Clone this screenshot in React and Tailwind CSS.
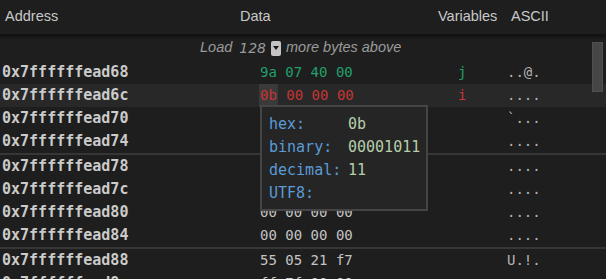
import React from "react";

const rowsA = [
  { addr: "0x7ffffffead68", data: ["9a", "07", "40", "00"], color: "text-[#22a06b]", v: "j", vc: "text-[#22a06b]", ascii: "..@." },
  { addr: "0x7ffffffead6c", data: ["0b", "00", "00", "00"], color: "text-[#c73535]", v: "i", vc: "text-[#c73535]", ascii: "....", hl: true },
  { addr: "0x7ffffffead70", data: ["00", "00", "00", "00"], ascii: "`..." },
  { addr: "0x7ffffffead74", data: ["00", "00", "00", "00"], ascii: "...." },
];
const rowsB = [
  { addr: "0x7ffffffead78", data: ["00", "00", "00", "00"], ascii: "...." },
  { addr: "0x7ffffffead7c", data: ["00", "00", "00", "00"], ascii: "...." },
  { addr: "0x7ffffffead80", data: ["00", "00", "00", "00"], ascii: "...." },
  { addr: "0x7ffffffead84", data: ["00", "00", "00", "00"], ascii: "...." },
];
const rowsC = [
  { addr: "0x7ffffffead88", data: ["55", "05", "21", "f7"], ascii: "U.!." },
  { addr: "0x7ffffffead8c", data: ["ff", "7f", "00", "00"], ascii: "...." },
];

function Row({ r }) {
  return (
    <div className={`flex h-[23px] items-center ${r.hl ? "bg-[#282828]" : ""}`}>
      <div className="w-[260px] pl-[2px] font-['DejaVu_Sans_Mono',monospace] font-bold text-[15px] text-[#cbcbcb]">
        {r.addr}
      </div>
      <div className={`w-[190px] h-full flex items-center font-['DejaVu_Sans_Mono',monospace] text-[14px] whitespace-pre ${r.color || "text-[#c4c4c4]"}`}>
        {r.data.map((b, i) => (
          <React.Fragment key={i}>
            {r.hl && i === 0 ? (
              <span className="h-full flex items-center bg-[#3a3a3a] -ml-[1px] px-[1px]">{b}</span>
            ) : (
              <span>{b}</span>
            )}
            {i < 3 ? <span> </span> : null}
          </React.Fragment>
        ))}
      </div>
      <div className={`w-[57px] pl-[8px] font-['DejaVu_Sans_Mono',monospace] text-[14px] ${r.vc || ""}`}>
        {r.v || ""}
      </div>
      <div className="font-['DejaVu_Sans_Mono',monospace] text-[14px] text-[#b4b4b4] whitespace-pre">
        {r.ascii}
      </div>
    </div>
  );
}

export default function App() {
  return (
    <div className="relative w-[606px] h-[279px] overflow-hidden bg-[#1e1e1e]">
      {/* header */}
      <div className="relative z-10 flex h-[35px] items-center border-b border-[#121212] shadow-[0_2px_3px_rgba(0,0,0,0.45)] font-['Liberation_Sans',Arial,sans-serif] text-[14.5px] text-[#c8c8c8] pb-[1px]">
        <div className="w-[240px] pl-[5px]">Address</div>
        <div className="w-[198px]">Data</div>
        <div className="w-[73px]">Variables</div>
        <div>ASCII</div>
      </div>

      {/* load row */}
      <div className="flex h-[26px] items-center pl-[200px] italic text-[14.5px] text-[#9a9a9a] font-['Liberation_Sans',Arial,sans-serif]">
        <span>Load</span>
        <span className="ml-[7px] font-['DejaVu_Sans',sans-serif] text-[14px]">128</span>
        <span className="ml-[5px] w-[10px] h-[15px] bg-[#c4c4c4] rounded-[2px] flex items-start justify-center pt-[5px]">
          <svg width="6" height="4" viewBox="0 0 6 4">
            <path d="M0 0 L6 0 L3 4 Z" fill="#1a1a1a" />
          </svg>
        </span>
        <span className="ml-[5px]">more bytes above</span>
      </div>

      {/* rows */}
      <div className="border-b-2 border-[#363636]">
        {rowsA.map((r) => (
          <Row key={r.addr} r={r} />
        ))}
      </div>
      <div className="border-b-2 border-[#363636]">
        {rowsB.map((r) => (
          <Row key={r.addr} r={r} />
        ))}
      </div>
      <div>
        {rowsC.map((r) => (
          <Row key={r.addr} r={r} />
        ))}
      </div>

      {/* tooltip */}
      <div className="absolute left-[260px] top-[105px] w-[168px] h-[106px] bg-[#252526] border-2 border-[#454545] pl-[7px] pt-[6px] font-['DejaVu_Sans_Mono',monospace] text-[15px] leading-[23px]">
        <div className="grid grid-cols-[79px_auto]">
          <span className="text-[#5b9bd5]">hex:</span>
          <span className="text-[#b5cea8]">0b</span>
          <span className="text-[#5b9bd5]">binary:</span>
          <span className="text-[#b5cea8]">00001011</span>
          <span className="text-[#5b9bd5]">decimal:</span>
          <span className="text-[#b5cea8]">11</span>
          <span className="text-[#5b9bd5]">UTF8:</span>
          <span className="text-[#b5cea8]"></span>
        </div>
      </div>

      {/* scrollbar */}
      <div className="absolute left-[592px] top-[42px] w-[11px] h-[50px] bg-[#464646] border border-[#505050]" />
    </div>
  );
}
